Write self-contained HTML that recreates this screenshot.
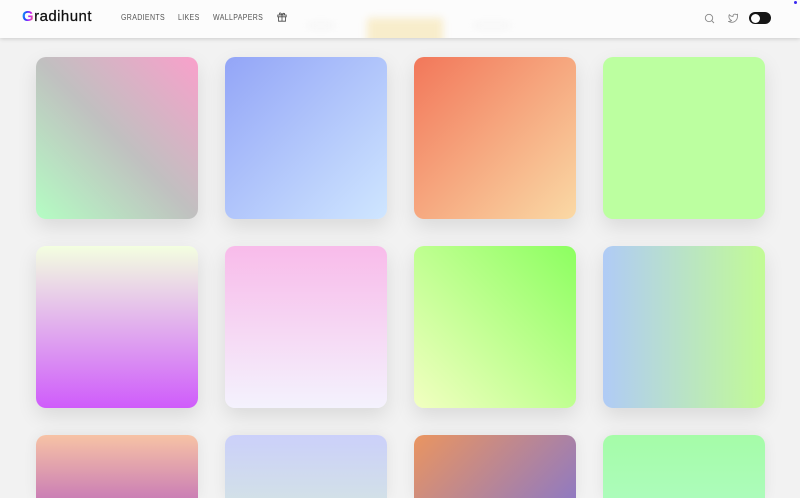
<!DOCTYPE html>
<html><head><meta charset="utf-8"><style>
html,body{margin:0;padding:0;width:800px;height:498px;overflow:hidden;background:#f2f2f2;font-family:"Liberation Sans",sans-serif}
#w{position:relative;width:800px;height:498px;overflow:hidden;background:#f2f2f2}
.c{position:absolute;width:162px;height:162px;border-radius:10px;box-shadow:0 8px 20px rgba(0,0,0,.1)}
.b{height:63px;border-radius:10px 10px 0 0;background-size:162px 162px!important;background-repeat:no-repeat!important;box-shadow:0 0 14px rgba(0,0,0,.07)}
header{position:absolute;left:0;top:0;width:800px;height:38px;background:#fcfcfc;box-shadow:0 1px 4px rgba(0,0,0,.16);overflow:hidden}
.blur{position:absolute;filter:blur(4px)}
.logo{position:absolute;left:22px;top:8px;font-size:15px;font-weight:400;color:#111;letter-spacing:.45px;line-height:17px;-webkit-text-stroke:.25px #111}
.logo span{font-weight:700;background:linear-gradient(100deg,#10d0f0 0%,#2040ff 35%,#d020f0 65%,#f0a040 100%);-webkit-background-clip:text;background-clip:text;color:transparent;-webkit-text-stroke:0}
.n{position:absolute;top:13px;font-size:8px;line-height:10px;letter-spacing:.4px;color:#555;transform:scaleX(.875);transform-origin:0 0;white-space:nowrap}
svg{position:absolute}
</style></head><body><div id="w">
<div class="c" style="left:36px;top:57px;background:linear-gradient(45deg,#b4fdc3 0%,#c0c0c0 50%,#f9a0cb 100%)"></div>
<div class="c" style="left:225px;top:57px;background:linear-gradient(135deg,#93a5f7,#cfe6ff)"></div>
<div class="c" style="left:414px;top:57px;background:linear-gradient(135deg,#f2775a,#fad9a5)"></div>
<div class="c" style="left:603px;top:57px;background:#bcffa0"></div>
<div class="c" style="left:36px;top:246px;background:linear-gradient(180deg,#f3ffe0,#cf5cfb)"></div>
<div class="c" style="left:225px;top:246px;background:linear-gradient(180deg,#f8bbea,#f4f2fd)"></div>
<div class="c" style="left:414px;top:246px;background:linear-gradient(45deg,#f2ffc1,#8cff60)"></div>
<div class="c" style="left:603px;top:246px;background:linear-gradient(90deg,#b0cbf6,#c2fb95)"></div>
<div class="c b" style="left:36px;top:435px;background:linear-gradient(180deg,#f7c3a5,#cb7fb5 39%,#9a3fd0)"></div>
<div class="c b" style="left:225px;top:435px;background:linear-gradient(180deg,#cbd0fa,#d2e0e8 39%,#dcf5c8)"></div>
<div class="c b" style="left:414px;top:435px;background:linear-gradient(135deg,#ea9560,#696eeb)"></div>
<div class="c b" style="left:603px;top:435px;background:linear-gradient(180deg,#a5fca8,#b8fbd8)"></div>
<header>
<div class="blur" style="left:367px;top:18px;width:76px;height:30px;background:#f8edcb;border-radius:3px"></div>
<div class="blur" style="left:308px;top:24px;width:26px;height:3px;background:#f0f0f0"></div>
<div class="blur" style="left:474px;top:24px;width:36px;height:3px;background:#f0f0f0"></div>
<div class="logo"><span>G</span>radihunt</div>
<div class="n" style="left:121px">GRADIENTS</div>
<div class="n" style="left:178px">LIKES</div>
<div class="n" style="left:213px">WALLPAPERS</div>
<svg style="left:277px;top:12px" width="10" height="10" viewBox="0 0 10 10" fill="none" stroke="#444" stroke-width=".8"><path d="M.8 3h8.400v1.800H.8zM1.500 4.800v4.400h7V4.800M5 3v6.200M5 3C3.500 3 2.500 2.400 2.500 1.500S4.200.5 5 3c.8-2.500 2.500-1.500 2.500-1.500S8.500 3 5 3z"/></svg>
<svg style="left:704px;top:13px" width="11" height="11" viewBox="0 0 11 11" fill="none" stroke="#888" stroke-width=".9"><circle cx="5" cy="5" r="3.700"/><path d="M7.700 7.700l2.300 2.300"/></svg>
<svg style="left:727px;top:13px" width="11" height="10" viewBox="0 0 24 22" fill="none" stroke="#888" stroke-width="1.900" stroke-linejoin="round"><path d="M23 2.500a9 9 0 0 1-2.800 1.300 4 4 0 0 0-7 2.700v1A9.500 9.500 0 0 1 5 3.500s-4 9 5 13a10.500 10.500 0 0 1-7 2c9 5 20 0 20-11.500a4 4 0 0 0-.1-.8A7 7 0 0 0 23 2.500z"/></svg>
<div style="position:absolute;left:749px;top:12px;width:22px;height:12px;border-radius:6px;background:#161616"></div>
<div style="position:absolute;left:750.500px;top:13.500px;width:9px;height:9px;border-radius:50%;background:#fff"></div>
<div style="position:absolute;left:794px;top:1px;width:3px;height:3px;border-radius:50%;background:#3a2af0"></div>
</header>
</div></body></html>
